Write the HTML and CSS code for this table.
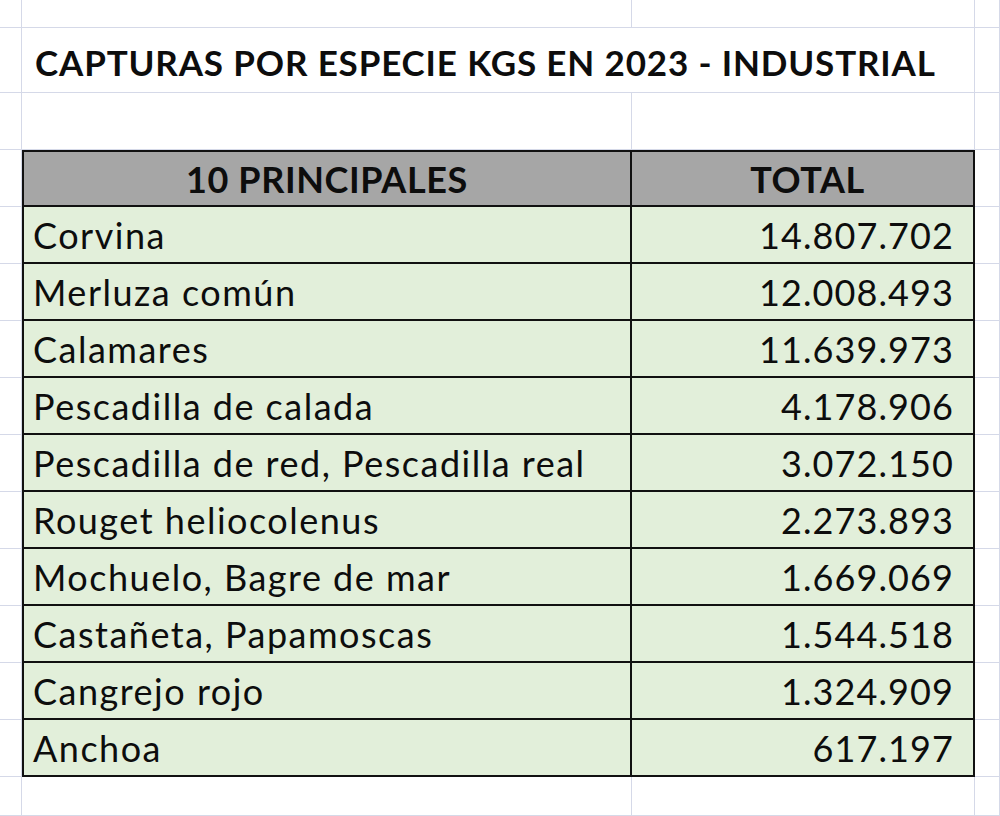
FILE: index.html
```html
<!DOCTYPE html>
<html lang="es">
<head>
<meta charset="utf-8">
<title>Capturas por especie</title>
<link rel="stylesheet" href="styles.css">
</head>
<body>
<div class="sheet">
  <div class="row r-top"><div class="c c0"></div><div class="c c1"></div><div class="c c2"></div><div class="c c3"></div></div>
  <div class="row r-title"><div class="c c0"></div><div class="c title">CAPTURAS POR ESPECIE KGS EN 2023 - INDUSTRIAL</div><div class="c c3"></div></div>
  <div class="row r-std"><div class="c c0"></div><div class="c c1"></div><div class="c c2"></div><div class="c c3"></div></div>
  <div class="row r-std"><div class="c c0"></div><div class="t th name first">10 PRINCIPALES</div><div class="t th total first">TOTAL</div><div class="c c3"></div></div>
  <div class="row r-std"><div class="c c0"></div><div class="t td name">Corvina</div><div class="t td total">14.807.702</div><div class="c c3"></div></div>
  <div class="row r-std"><div class="c c0"></div><div class="t td name">Merluza común</div><div class="t td total">12.008.493</div><div class="c c3"></div></div>
  <div class="row r-std"><div class="c c0"></div><div class="t td name">Calamares</div><div class="t td total">11.639.973</div><div class="c c3"></div></div>
  <div class="row r-std"><div class="c c0"></div><div class="t td name">Pescadilla de calada</div><div class="t td total">4.178.906</div><div class="c c3"></div></div>
  <div class="row r-std"><div class="c c0"></div><div class="t td name">Pescadilla de red, Pescadilla real</div><div class="t td total">3.072.150</div><div class="c c3"></div></div>
  <div class="row r-std"><div class="c c0"></div><div class="t td name">Rouget heliocolenus</div><div class="t td total">2.273.893</div><div class="c c3"></div></div>
  <div class="row r-std"><div class="c c0"></div><div class="t td name">Mochuelo, Bagre de mar</div><div class="t td total">1.669.069</div><div class="c c3"></div></div>
  <div class="row r-std"><div class="c c0"></div><div class="t td name">Castañeta, Papamoscas</div><div class="t td total">1.544.518</div><div class="c c3"></div></div>
  <div class="row r-std"><div class="c c0"></div><div class="t td name">Cangrejo rojo</div><div class="t td total">1.324.909</div><div class="c c3"></div></div>
  <div class="row r-std"><div class="c c0"></div><div class="t td name">Anchoa</div><div class="t td total">617.197</div><div class="c c3"></div></div>
  <div class="row r-bottom"><div class="c c0"></div><div class="c c1"></div><div class="c c2"></div><div class="c c3"></div></div>
</div>
</body>
</html>
```
FILE: styles.css
```css
html, body {
  margin: 0;
  padding: 0;
  background: #ffffff;
}
.sheet {
  width: 1000px;
  height: 816px;
  overflow: hidden;
  display: flex;
  flex-direction: column;
  font-family: Lato, "Open Sans", sans-serif;
  color: #0d0d0d;
}
.row {
  display: flex;
  flex: none;
}
.r-top { height: 28px; }
.r-title { height: 65px; }
.r-std { height: 57px; }
.r-bottom { flex: 1; }
.c {
  box-sizing: border-box;
  border-right: 1px solid #d5d9e8;
  border-bottom: 1px solid #d5d9e8;
  height: 100%;
}
.c0 { width: 22px; }
.c1 { width: 610px; }
.c2 { width: 343px; }
.c3 { flex: 1; }
.title {
  width: 953px;
  display: flex;
  align-items: flex-start;
  padding: 17px 0 0 13px;
  font-weight: 700;
  font-size: 35px;
  line-height: 35px;
  letter-spacing: 0.85px;
  white-space: nowrap;
}
.t {
  box-sizing: border-box;
  height: 100%;
  display: flex;
  align-items: flex-start;
  border-right: 2px solid #111111;
  border-bottom: 2px solid #111111;
  white-space: nowrap;
}
.t.first { border-top: 2px solid #111111; }
.t.name { width: 610px; border-left: 2px solid #111111; }
.t.total { width: 343px; }
.th {
  background: #a6a6a6;
  justify-content: center;
  font-weight: 700;
  font-size: 36px;
  line-height: 36px;
  letter-spacing: 0.6px;
  padding-top: 9px;
}
.th.total { padding-left: 10px; }
.td {
  background: #e2efda;
  font-size: 36px;
  line-height: 36px;
  padding-top: 10px;
}
.td.name { padding-left: 9px; letter-spacing: 1.5px; }
.td.total { justify-content: flex-end; padding-right: 19px; letter-spacing: 1.1px; }
```
